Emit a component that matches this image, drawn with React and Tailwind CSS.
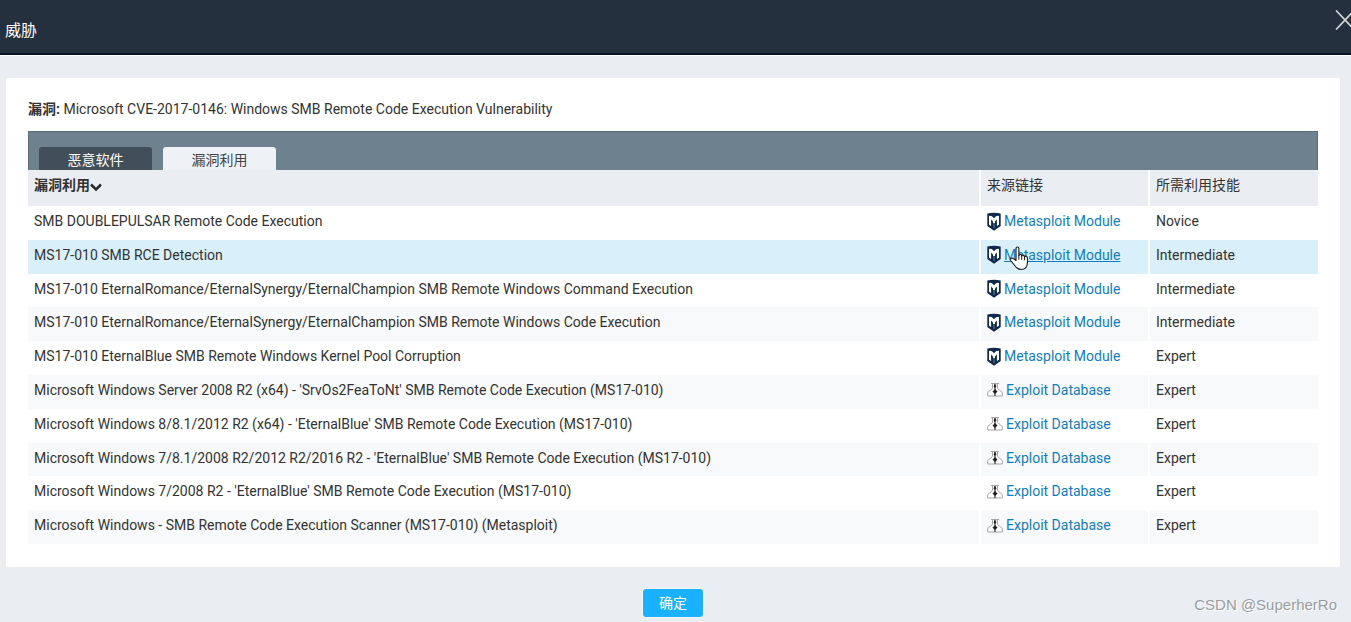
import clsx from 'clsx'

const EXPLOITS = [
  { name: 'SMB DOUBLEPULSAR Remote Code Execution', source: 'metasploit', skill: 'Novice' },
  { name: 'MS17-010 SMB RCE Detection', source: 'metasploit', skill: 'Intermediate', active: true },
  { name: 'MS17-010 EternalRomance/EternalSynergy/EternalChampion SMB Remote Windows Command Execution', source: 'metasploit', skill: 'Intermediate' },
  { name: 'MS17-010 EternalRomance/EternalSynergy/EternalChampion SMB Remote Windows Code Execution', source: 'metasploit', skill: 'Intermediate' },
  { name: 'MS17-010 EternalBlue SMB Remote Windows Kernel Pool Corruption', source: 'metasploit', skill: 'Expert' },
  { name: "Microsoft Windows Server 2008 R2 (x64) - 'SrvOs2FeaToNt' SMB Remote Code Execution (MS17-010)", source: 'exploitdb', skill: 'Expert' },
  { name: "Microsoft Windows 8/8.1/2012 R2 (x64) - 'EternalBlue' SMB Remote Code Execution (MS17-010)", source: 'exploitdb', skill: 'Expert' },
  { name: "Microsoft Windows 7/8.1/2008 R2/2012 R2/2016 R2 - 'EternalBlue' SMB Remote Code Execution (MS17-010)", source: 'exploitdb', skill: 'Expert' },
  { name: "Microsoft Windows 7/2008 R2 - 'EternalBlue' SMB Remote Code Execution (MS17-010)", source: 'exploitdb', skill: 'Expert' },
  { name: 'Microsoft Windows - SMB Remote Code Execution Scanner (MS17-010) (Metasploit)', source: 'exploitdb', skill: 'Expert' },
]

const SOURCES = {
  metasploit: { label: 'Metasploit Module', Icon: MetasploitIcon },
  exploitdb: { label: 'Exploit Database', Icon: ExploitDbIcon },
}

export default function App() {
  return (
    <div className="relative flex min-h-screen flex-col bg-[#eaeef2] font-[Roboto,'Noto_Sans_CJK_SC',sans-serif] text-sm leading-5 text-[#333]">
      <header className="flex h-14 items-start justify-between overflow-hidden border-b border-white bg-[#24303e] pl-[5px] shadow-[inset_0_-2px_0_#0b1424]">
        <h1 className="pt-[19px] text-base leading-6 text-white">威胁</h1>
        <button type="button" aria-label="关闭" className="-mr-[3px] pt-[10px]">
          <CloseIcon />
        </button>
      </header>

      <main className="mt-[22px] mr-[11px] ml-[6px] rounded-xs bg-white px-[22px] pt-[21px] pb-[23px]">
        <p>
          <strong className="font-bold">漏洞:</strong> Microsoft CVE-2017-0146: Windows SMB Remote Code Execution Vulnerability
        </p>

        <div className="mt-3 flex items-end gap-[11px] border border-b-0 border-[#5a6f7b] bg-[#6d818e] pt-[15px] pl-[10px]">
          <Tab label="恶意软件" />
          <Tab label="漏洞利用" selected />
        </div>

        <table className="h-[374px] w-full table-fixed border-collapse text-left">
          <colgroup>
            <col />
            <col className="w-[169px]" />
            <col className="w-[169px]" />
          </colgroup>
          <thead>
            <tr className="h-9 bg-[#eaedf2] align-top">
              <th className="px-[6px] pt-[5px] font-bold">
                <button type="button" className="flex items-center">
                  漏洞利用
                  <SortIcon />
                </button>
              </th>
              <th className="border-l-2 border-white px-[6px] pt-[5px] font-normal">来源链接</th>
              <th className="border-l-2 border-white px-[6px] pt-[5px] font-normal">所需利用技能</th>
            </tr>
          </thead>
          <tbody>
            {EXPLOITS.map((e) => (
              <Row key={e.name} exploit={e} />
            ))}
          </tbody>
        </table>
      </main>

      <footer className="mt-[22px] flex justify-center pr-[5px] pb-[5px]">
        <button type="button" className="rounded-[3px] bg-[#1ab2ff] px-4 py-1 text-white shadow-[0_0_0_1px_#f5f9fc]">
          确定
        </button>
      </footer>

      <span className="absolute right-[14px] bottom-[7px] font-['Liberation_Sans',sans-serif] text-[15px] text-[#999da2] [text-shadow:1px_1px_0_#fff]">
        CSDN @SuperherRo
      </span>
    </div>
  )
}

function Tab({ label, selected }) {
  return (
    <button
      type="button"
      className={clsx(
        'w-[113px] rounded-t-[3px] pt-[3px]',
        selected ? 'bg-[#eef1f6] text-[#444]' : 'bg-[#424f5b] text-white',
      )}
    >
      {label}
    </button>
  )
}

function Row({ exploit }) {
  const { label, Icon } = SOURCES[exploit.source]
  return (
    <tr className={clsx('align-top', exploit.active ? 'bg-[#d9f0fb]' : 'odd:bg-white even:bg-[#f8f9fa]')}>
      <td className="px-[6px] pt-[5px]">{exploit.name}</td>
      <td className="relative border-l-2 border-white px-[6px] pt-[5px]">
        <a href="#" className="flex items-center gap-[3px] text-[#117dbf]">
          <Icon />
          <span className={clsx(exploit.active && 'underline')}>{label}</span>
        </a>
        {exploit.active && <HandCursor />}
      </td>
      <td className="border-l-2 border-white px-[6px] pt-[5px]">{exploit.skill}</td>
    </tr>
  )
}

function CloseIcon() {
  return (
    <svg width="19" height="20" viewBox="0 0 19 20" fill="none" stroke="#d4d6d6" strokeWidth="1.7">
      <path d="M1 .5 19 19.5M19 .5 1 19.5" />
    </svg>
  )
}

function SortIcon() {
  return (
    <svg className="mt-1" width="12" height="9" viewBox="0 0 12 9" fill="none" stroke="#2b2b2b" strokeWidth="2.6">
      <path d="M1 1.5 6 6.5l5-5" />
    </svg>
  )
}

function MetasploitIcon() {
  return (
    <svg className="shrink-0" width="14" height="19" viewBox="0 0 14 19">
      <path d="M.3 1.4Q7 .2 13.700 1.400V14L7 18.800.300 14Z" fill="#10294a" />
      <path d="M2 4Q4.500 3.200 7 6.200 9.500 3.200 12 4V12.800L9.900 14V7.400L8 9.400V11H6V9.400L4.100 7.400V14L2 12.800Z" fill="#fff" />
      <path d="M7 11v5" stroke="#6d83a0" />
    </svg>
  )
}

function ExploitDbIcon() {
  return (
    <svg className="shrink-0" width="16" height="15" viewBox="0 0 16 15">
      <path d="M4 1.500h8M5.500 1.500v5L.7 10.500v3.500H15.300v-3.500L10.500 6.500v-5" fill="#fff" stroke="#a5a5a5" />
      <path d="M8 2v12" stroke="#444" strokeWidth="1.300" />
      <path d="M6.500 4.300 8 2 9.500 4.300 8 6ZM5.500 9.500 8 7 10.500 9.500 8 12Z" fill="#222" />
    </svg>
  )
}

function HandCursor() {
  return (
    <svg className="pointer-events-none absolute top-[6px] left-[28px]" width="20" height="25" viewBox="0 0 20 25">
      <path
        d="M7 14.500V2.800C7 .4 9.900.4 9.900 2.800V9.500C10.300 8 12.500 8 12.700 10 13.200 8.600 15.400 8.900 15.500 10.900 16.200 9.700 18.500 10.100 18.500 12.400V16C18.500 20.800 16.200 23.500 12.300 23.500 8.700 23.500 7.200 21.800 5.300 19L1.700 14.500C.4 12.700 2.600 11.300 4.200 12.600Z"
        fill="#fff"
        stroke="#222"
        strokeWidth="1.200"
        strokeLinejoin="round"
      />
      <path d="M9.900 9.500v3.800M12.700 10v3.500M15.500 10.900v3" stroke="#222" strokeLinecap="round" />
    </svg>
  )
}
